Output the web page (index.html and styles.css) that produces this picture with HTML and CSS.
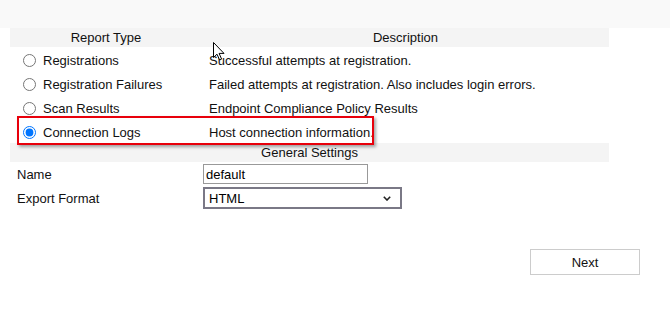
FILE: index.html
```html
<!DOCTYPE html>
<html lang="en">
<head>
  <meta charset="UTF-8">
  <meta name="viewport" content="width=device-width, initial-scale=1.0">
  <title>Report Export</title>
<link rel="stylesheet" href="styles.css">
</head>
<body>
  <div class="top-band"></div>
  <div class="page">
    <table class="report-table">
      <tr class="head-row">
        <th class="col-type">Report Type</th>
        <th>Description</th>
      </tr>
      <tr class="type-row">
        <td><label><input type="radio" name="report"> Registrations</label></td>
        <td>Successful attempts at registration.</td>
      </tr>
      <tr class="type-row">
        <td><label><input type="radio" name="report"> Registration Failures</label></td>
        <td>Failed attempts at registration. Also includes login errors.</td>
      </tr>
      <tr class="type-row">
        <td><label><input type="radio" name="report"> Scan Results</label></td>
        <td>Endpoint Compliance Policy Results</td>
      </tr>
      <tr class="type-row">
        <td><label><input type="radio" name="report" checked> Connection Logs</label></td>
        <td>Host connection information.</td>
      </tr>
      <tr class="head-row">
        <th colspan="2">General Settings</th>
      </tr>
      <tr class="setting-row">
        <td class="setting-label">Name</td>
        <td><input type="text" class="name-input" value="default"></td>
      </tr>
      <tr class="setting-row">
        <td class="setting-label">Export Format</td>
        <td>
          <span class="select-wrap">
            <select class="format-select">
              <option>HTML</option>
              <option>CSV</option>
              <option>XML</option>
            </select>
            <svg class="chevron" width="8" height="5" viewBox="0 0 8 5">
              <path d="M0.8 0.8 L4 4 L7.2 0.8" fill="none" stroke="#222" stroke-width="1.6"/>
            </svg>
          </span>
        </td>
      </tr>
    </table>

    <div class="actions">
      <button class="next-btn">Next</button>
    </div>

    <div class="highlight"></div>

    <svg class="cursor" width="12" height="19" viewBox="0 0 12 19">
      <path d="M0.5 0.5 L0.5 15.5 L4 12.2 L6.6 18 L8.6 17.1 L6.1 11.4 L11 11.4 Z" fill="#fff" stroke="#000" stroke-width="1"/>
    </svg>
  </div>
</body>
</html>
```

FILE: styles.css
```css
body {
  font-family: "Liberation Sans", Arial, sans-serif;
  font-size: 13px;
  color: #111;
  background-color: #fff;
  margin: 0;
  padding: 0;
}

.top-band {
  height: 28px;
  background-color: #f9f9f9;
}

.page {
  position: relative;
  padding-left: 10px;
}

.report-table {
  width: 599px;
  border-collapse: collapse;
}

.report-table th {
  font-weight: normal;
  text-align: center;
  height: 19px;
  padding: 0;
  background-color: #f4f4f4;
}

.col-type {
  width: 192px;
}

.report-table td {
  height: 24px;
  padding: 0 0 0 7px;
  vertical-align: middle;
}

.report-table .type-row td {
  padding-top: 2px;
  height: 22px;
}

.report-table td + td {
  padding-left: 7px;
}

.report-table label {
  display: flex;
  align-items: center;
  gap: 7px;
}

.report-table input[type="radio"] {
  width: 13px;
  height: 13px;
  margin: 0 0 0 6px;
}

.report-table td.setting-label {
  padding-left: 7px;
}

.report-table .setting-row td + td {
  padding-left: 1px;
}

.name-input {
  box-sizing: border-box;
  width: 165px;
  height: 20px;
  padding: 1px 2px;
  border: 1px solid #999;
  font-family: "Liberation Sans", Arial, sans-serif;
  font-size: 13px;
  color: #000;
}

.select-wrap {
  position: relative;
  display: inline-block;
}

.format-select {
  box-sizing: border-box;
  width: 199px;
  height: 22px;
  padding: 0 4px;
  border: 2px solid #7a7886;
  border-radius: 0;
  background-color: #fff;
  font-family: "Liberation Sans", Arial, sans-serif;
  font-size: 13px;
  color: #000;
  appearance: none;
  -webkit-appearance: none;
}

.chevron {
  position: absolute;
  right: 11px;
  top: 9px;
  pointer-events: none;
}

.actions {
  display: flex;
  justify-content: flex-end;
  width: 630px;
  margin-top: 39px;
}

.next-btn {
  width: 110px;
  height: 26px;
  background-color: #fff;
  border: 1px solid #ccc;
  font-family: "Liberation Sans", Arial, sans-serif;
  font-size: 13px;
  color: #111;
  cursor: pointer;
}

.highlight {
  position: absolute;
  left: 17px;
  top: 88px;
  width: 353px;
  height: 25px;
  border: 2px solid #e8000b;
  box-shadow: 2px 2px 3px rgba(0, 0, 0, 0.35);
  pointer-events: none;
}

.cursor {
  position: absolute;
  left: 213px;
  top: 14px;
}
```
